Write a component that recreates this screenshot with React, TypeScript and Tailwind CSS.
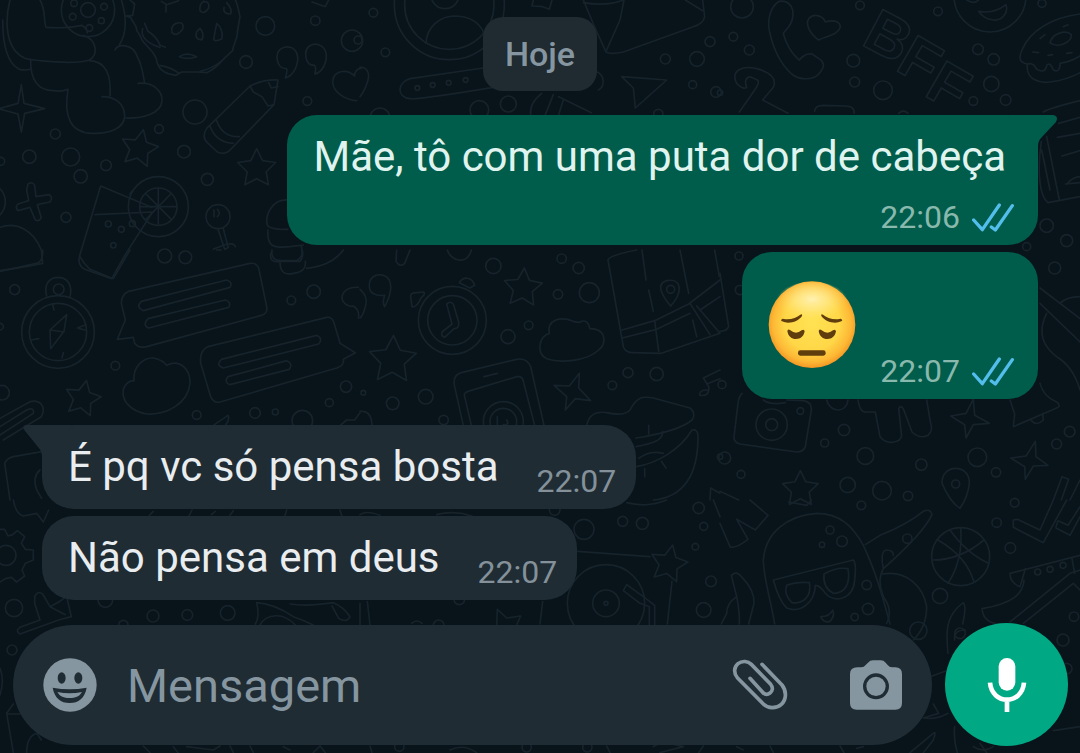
import { ReactNode } from "react";

type Dot = [number, number, number];

interface Message {
  id: number;
  text?: string;
  time: string;
  mine: boolean;
  first: boolean;
}

const messages: Message[] = [
  { id: 1, text: "Mãe, tô com uma puta dor de cabeça", time: "22:06", mine: true, first: true },
  { id: 2, time: "22:07", mine: true, first: false },
  { id: 3, text: "É pq vc só pensa bosta", time: "22:07", mine: false, first: true },
  { id: 4, text: "Não pensa em deus", time: "22:07", mine: false, first: false },
];

function starPath(cx: number, cy: number, r: number, rot: number, points = 5, inner = 0.5) {
  const out: string[] = [];
  for (let i = 0; i < points * 2; i++) {
    const a = ((rot - 90 + (i * 180) / points) * Math.PI) / 180;
    const d = i % 2 === 0 ? r : r * inner;
    out.push(`${(cx + Math.cos(a) * d).toFixed(1)} ${(cy + Math.sin(a) * d).toFixed(1)}`);
  }
  return `M${out.join("L")}Z`;
}

function Tile({ x, y, dots, paths, children }: { x: number; y: number; dots: Dot[]; paths: string[]; children?: ReactNode }) {
  return (
    <g transform={`translate(${x} ${y})`}>
      {dots.map(([cx, cy, r]) => (
        <circle key={`${cx}-${cy}-${r}`} cx={cx} cy={cy} r={r} />
      ))}
      {paths.map((d) => (
        <path key={d} d={d} />
      ))}
      {children}
    </g>
  );
}

function Wallpaper() {
  return (
    <svg
      className="absolute inset-0 h-full w-full"
      viewBox="0 0 3240 2259"
      preserveAspectRatio="xMidYMid slice"
      fill="none"
      stroke="#17232a"
      strokeWidth="5"
      strokeLinecap="round"
      strokeLinejoin="round"
      aria-hidden="true"
    >
      <Tile
        x={0}
        y={0}
        dots={[
          [796, 78, 28], [946, 62, 14], [1056, 122, 32], [738, 186, 19], [922, 303, 13], [585, 336, 36],
          [477, 387, 13], [552, 455, 19], [166, 402, 15], [88, 470, 20], [212, 471, 27], [318, 496, 16],
          [242, 529, 20], [198, 652, 15], [622, 538, 18], [264, 30, 80], [264, 30, 22], [222, 10, 10],
          [312, 20, 10], [218, 50, 10], [304, 62, 9], [268, 84, 10], [654, 650, 36], [475, 620, 90],
          [475, 620, 56], [325, 672, 9], [397, 671, 9], [364, 688, 9], [340, 736, 8], [2, 484, 12],
          [-40, 605, 56],
        ]}
        paths={[
          "M30 0C14 60 20 120 45 152C70 180 85 178 120 182C180 188 240 190 268 180C295 168 292 118 250 106",
          "M120 0C138 30 130 60 138 82C170 84 210 84 245 76C255 80 262 92 262 98",
          "M8 60C8 140 22 190 58 208Q78 212 90 208",
          "M92 178C90 240 115 272 160 272Q185 276 204 268C190 350 212 398 275 400C330 402 372 384 374 350C374 310 345 290 306 290",
          "M268 182C318 184 334 225 330 288",
          "M345 150C350 130 400 130 412 170C426 195 430 225 434 250",
          "M414 250C460 246 488 272 486 304C482 340 430 356 376 354",
          "M364 0C380 50 380 100 358 135",
          "M390 0L404 12L398 46L376 48L392 52C400 72 412 76 410 92C420 100 422 118 432 128C450 148 470 165 472 190C480 212 500 224 528 226L545 216L592 216L620 218C640 210 660 190 672 176L698 152C700 130 714 115 712 96L720 50C716 30 712 10 706 0",
          "M434 70L444 94Q470 110 480 136L496 142M428 86C420 108 440 130 480 142M480 196Q520 204 536 220M600 214Q640 204 660 186",
          "M538 170Q560 155 590 170Q562 180 538 170M600 85q14 14 6 34q-24 0-16-24zM650 70q20 16 16 46q-28 14-24-4zM528 70q26-8 20 18q-18 24-32 10q-4-20 12-28zM610 4q20 0 16 20q-14 22-26 8q-2-20 10-28M680 8q18 20 12 34q-24 0-20-20",
          "M484 4L500 14L536 2M498 16V36M936 6L976 20L986 0",
          "M832 180C826 150 850 136 872 142C896 152 898 180 886 206Q874 230 856 234Q862 216 860 206C842 206 834 196 832 180Z",
          "M918 172C912 142 934 128 956 134C982 144 984 172 972 198Q960 220 944 222Q950 206 944 196C930 196 920 190 918 172Z",
          "M1084 205C1070 205 1062 220 1064 228C1040 206 1000 210 998 246C1000 280 1040 300 1070 302",
          "M750 258L620 385Q604 410 622 428L652 456Q676 468 696 444L822 314L834 240Q790 238 750 258ZM750 258L760 276L786 290L804 318L822 314M806 248L814 264L834 260M650 362Q668 412 718 410M630 378Q648 428 700 430",
          starPath(418, 446, 58, 12),
          starPath(770, 506, 60, 0),
          "M64 254L72 310L134 326L74 340L64 396L54 342L-4 326L54 310Z",
          "M84 552Q98 544 104 556L108 590L148 584Q160 594 150 606L112 614L124 654Q116 666 106 660L90 622L54 632Q44 622 54 612L86 602L80 570Z",
          "M302 558L455 622M302 558L238 770Q232 800 260 810L335 836L378 760L458 636L285 644",
          "M390 582Q394 575 398 572M475 566V672M422 620H530M438 582L514 658M512 582L438 658M0 682C50 664 100 690 124 750L128 790Q80 800 0 812",
          "M654 688L674 748Q690 740 684 740L670 686M642 630V650M652 628q12 12 0 22M640 748Q700 720 706 740",
          "M866 600C820 596 794 640 802 676Q812 690 864 688M804 690C800 740 820 745 870 740L910 735M812 760Q808 790 840 784H900Q914 770 904 740",
        ]}
      />
      <Tile
        x={1080}
        y={0}
        dots={[
          [40, 38, 13], [76, 157, 13], [-6, 120, 12], [172, 264, 7], [218, 255, 7], [266, 248, 7], [317, 240, 7],
          [358, 330, 28], [445, 312, 24], [60, 354, 30], [916, 177, 15], [1011, 177, 22], [1050, 125, 15],
          [998, 254, 12], [1068, 276, 16], [895, 342, 14], [255, -16, 42], [268, 14, 165], [268, 14, 134],
        ]}
        paths={[
          "M198 130C200 80 240 50 280 48C330 48 360 70 372 100",
          "M0 202C20 200 30 220 24 240Q16 270 0 290",
          "M370 204L150 236C110 248 110 292 150 296Q170 300 400 262",
          "M520 0L516 18L548 20L568 28L576 0",
          "M670 0L700 72L738 156Q750 164 790 156L1000 80Q1030 72 1034 50L1028 0M792 0L780 60L740 150M670 8Q740 20 790 0M976 0L1028 32",
          "M785 230L920 240L826 324L820 264ZM710 215C735 225 735 260 715 270",
          "M545 280C520 300 508 320 512 345M580 284L556 344M596 290L694 338M610 300L596 344",
        ]}
      />
      <Tile
        x={2160}
        y={0}
        dots={[
          [66, 20, 34], [40, 110, 13], [88, 150, 15], [420, 16, 13], [654, 34, 13], [400, 182, 19], [404, 246, 15],
          [489, 271, 28], [774, 148, 16], [821, 178, 17], [814, 252, 23], [857, 300, 16], [760, 303, 13],
          [966, 10, 12], [0, 278, 8], [980, 677, 20], [1040, 722, 18], [810, -12, 108], [920, 740, 12],
        ]}
        paths={[
          "M178 4C150 20 142 60 148 92C160 150 185 195 215 222C240 242 280 240 296 222C312 204 316 190 300 178L276 162Q256 158 238 180C215 162 196 128 190 100L206 80Q222 60 218 30Q208 0 178 4Z",
          "M296 120C268 100 256 72 266 56C282 38 310 48 316 66C340 58 364 64 360 84C352 104 322 108 296 120Z",
          "M776 34C808 40 838 30 858 14C866 40 846 62 820 60Q790 56 776 34ZM740 0Q762 14 776 0",
          "M1080 42C1000 52 930 90 906 150C890 184 910 190 922 192C916 240 960 250 990 246Q1040 240 1080 218M922 192Q940 186 950 208Q976 222 980 196Q990 184 1000 210Q1020 220 1020 190Q1050 186 1080 168",
          "M990 128C1000 96 1040 90 1054 104C1056 128 1010 146 990 128ZM960 116L975 104M938 156L956 158M984 166L998 164M1030 80L1044 74M1040 160L1056 158",
          "M50 250C30 210 70 196 110 206C150 216 172 236 160 262L128 300L204 340M50 250Q70 270 80 262Q70 236 90 230L112 240Q122 246 100 276L58 336M284 334Q284 316 310 316L380 318Q404 320 402 340M536 340q14-14 28 0",
          "M970 336Q990 324 1080 302M1016 370L1080 352M1012 412L1080 400M1026 468L1080 452M1040 552Q1060 530 1080 530M964 425C950 520 960 590 984 608L1080 590M980 410L1018 600M965 450L990 570M1036 552L1080 548",
        ]}
      >
        <g fontFamily="'Liberation Sans', sans-serif" fontWeight="700" fontSize="180">
          <text transform="translate(420 132) rotate(28)">B</text>
          <text transform="translate(522 208) rotate(30)">F</text>
          <text transform="translate(608 284) rotate(30)">F</text>
        </g>
      </Tile>
      <Tile
        x={0}
        y={750}
        dots={[
          [44, 119, 15], [176, 118, 16], [174, 246, 109], [174, 246, 86], [346, 347, 13], [494, 18, 21],
          [556, 22, 19], [874, 151, 13], [941, 125, 20], [1038, 410, 17], [988, 458, 12], [765, 489, 16],
          [826, 486, 9], [590, 495, 13], [907, 512, 31], [6, 428, 22], [0, 230, 10],
        ]}
        paths={[
          "M140 138C130 100 150 82 176 82C204 84 218 106 210 140",
          "M200 194L150 240L152 296L192 244ZM150 240L192 246M158 164L162 180M232 234L258 224M94 270L116 266M186 324L190 308M238 236L256 240",
          "M0 64L110 40Q130 34 128 0M240 20Q250 40 270 58L340 86L390 0",
          "M386 124L750 40Q770 38 776 54L800 170Q804 190 784 196L440 290Q415 296 404 280L400 262L352 268L376 210L364 160Q364 134 386 124Z",
          "M424 154L680 90Q700 96 690 112L430 182Q406 172 424 154ZM444 206L676 150Q696 156 686 172L446 234Q426 226 444 206Z",
          "M624 290L980 202Q996 200 1002 218L1020 280L1066 308L1030 328Q1034 346 1010 354L660 456Q640 460 632 440L602 340Q598 300 624 290Z",
          "M664 328L950 256Q970 266 956 282L670 354Q646 346 664 328ZM684 380L860 332Q880 340 868 358L690 404Q670 396 684 380Z",
          "M402 392C398 350 430 322 460 324Q490 330 500 346C540 326 572 358 570 400C564 460 500 496 440 492C390 484 364 450 370 418Q380 392 402 392Z",
          starPath(248, 446, 56, 12),
          "M0 505L90 455C120 448 140 470 124 500L10 570M0 530L80 480Q104 470 100 490L0 555M640 526L684 496Q690 510 676 526M1016 530L1040 510H1064L1080 488",
          "M30 750L14 640Q20 625 40 620L130 604M120 660Q96 680 110 720L125 745",
          "M816 0Q812 30 840 32H890Q910 20 906 0M840 36Q840 80 880 70Q920 66 916 34M920 55C960 50 1000 40 1030 0",
          "M1075 112C1040 110 1020 130 1028 152Q1040 172 1060 168Q1080 180 1075 204M650 0h14",
        ]}
      />
      <Tile
        x={1080}
        y={750}
        dots={[
          [400, 48, 23], [605, 26, 14], [656, 54, 17], [594, 133, 14], [688, 128, 30], [506, 226, 13],
          [444, 260, 21], [277, 211, 102], [277, 211, 74], [98, 460, 19], [197, 440, 22], [251, 510, 14],
          [757, 406, 13], [804, 368, 15], [890, 372, 20], [430, 515, 60], [430, 515, 40], [932, 118, 12],
          [10, 428, 7], [1080, 620, 8],
        ]}
        paths={[
          "M110 0L108 34Q120 54 134 40L150 0M262 0C270 30 320 50 334 0",
          "M28 110C26 80 50 70 70 76C100 86 98 126 74 170Q66 160 74 136Q30 140 28 110ZM0 118Q26 140 16 170Q10 196 0 204",
          "M152 140Q150 128 170 128L192 126Q196 134 184 142Q170 174 156 170ZM298 98C310 78 336 80 344 106L330 114Z",
          "M260 162Q270 152 280 162L296 216Q298 236 282 236L254 262Q242 258 246 246L276 222Z",
          starPath(489, 114, 60, 4),
          starPath(98, 330, 74, 2),
          "M568 250C560 210 600 198 640 214Q660 220 664 214Q684 208 690 236C740 236 740 280 716 300C680 334 600 340 560 326C528 310 536 260 568 250Z",
          "M744 30Q746 16 830 0M744 30L790 290Q796 308 820 308L904 310L1080 250M786 240L884 212L986 162L1080 90M786 264L890 238L990 190M1010 168L1080 250M990 160L1050 254",
          "M1064 0L1078 80M1020 180L1080 140M884 212L896 304M960 0L986 130",
          "M846 0L858 90M866 120L880 184M932 168C900 130 890 100 920 92C960 84 974 120 932 168ZM998 210L1010 260",
          "M310 526L284 410Q276 376 304 368L470 328Q500 322 512 350L552 526M334 526L314 440Q310 428 324 424L470 380Q488 378 490 394L524 526M372 380L412 370M412 500V526M440 510Q450 526 430 524",
          "M658 370L656 414L692 452L646 446L616 480L620 440L582 406L628 408Z",
          "M680 526Q690 480 740 488Q790 500 810 480C830 440 850 438 880 444L990 474Q1010 490 996 510C960 540 880 556 828 564M828 590C880 580 910 570 908 544M828 650C890 640 960 600 996 540Q1014 536 1014 560C1014 660 980 740 880 750",
          "M866 526V552M836 625Q870 600 910 610M904 634L918 654M854 656V680M1080 360L1030 384L1046 410Q1050 440 1020 436Q1016 420 1042 420M1080 386L1040 402M1050 750L1052 714L1080 730M0 484Q34 480 36 526",
        ]}
      />
      <Tile
        x={2160}
        y={750}
        dots={[
          [57, 18, 12], [1004, 54, 18], [60, 120, 14], [155, 524, 47], [155, 524, 18], [241, 483, 10], [372, 540, 17],
          [314, 579, 12], [436, 618, 25], [604, 644, 17], [772, 622, 28], [828, 667, 14], [1049, 545, 16],
          [1010, 582, 15], [14, 624, 18], [63, 673, 12], [383, 705, 23], [486, 722, 28], [564, 738, 14],
          [707, 702, 12], [6, 404, 12],
        ]}
        paths={[
          "M0 70L26 230Q20 244 0 244M960 114L1080 206M960 160L1080 276M1020 160Q1040 140 1080 140M980 190C950 250 970 290 1010 320Q1060 350 1080 420",
          "M66 430Q56 440 54 460L42 560Q40 576 60 582L230 606Q250 606 256 590L274 480Q276 456 250 452L200 450M130 450Q150 466 196 458",
          "M320 450C330 490 380 490 384 450M414 450Q420 490 440 486L466 486L480 560Q500 584 530 574Q548 566 544 550L536 476Q540 464 550 476L576 546Q600 568 624 556Q640 540 632 520L620 450",
          "M760 448L764 496L808 520L760 524L738 564L734 524L692 498L738 490Z",
          "M946 574L948 620L984 646L940 648L916 688L914 650L872 624L918 618Z",
          starPath(241, 718, 56, 0),
          "M870 450L884 492L880 530L1010 474Q1026 468 1010 456Q970 440 960 400M934 512Q950 530 970 510L968 490",
          "M666 700C664 640 750 640 748 700Q744 740 720 775Q690 756 666 700ZM1000 750L1026 680L1046 688L1024 750M1080 690L1050 750M0 724L56 750",
        ]}
      />
      <Tile
        x={0}
        y={1500}
        dots={[
          [42, 324, 26], [36, 450, 15], [459, 348, 18], [562, 345, 16], [683, 339, 22], [18, 166, 30],
          [316, 300, 22], [370, 375, 14],
        ]}
        paths={[
          "M40 0Q46 40 70 48L110 40L130 66L146 30M0 88L14 88L24 108L38 104L52 92L74 110L64 130L76 148L100 150V180L76 190L66 210L74 228L50 246L34 232L16 236L0 246",
          "M104 290Q112 270 128 282L150 320L176 306L200 290L214 350L176 360L60 402Q44 392 60 382L120 360L104 310ZM150 320L196 344",
          "M0 505Q14 540 0 585M40 612L20 640L40 758M20 642H60M80 758Q80 710 110 700L124 720",
          "M448 46L460 34M566 50L576 30M634 44L646 34M690 46L700 32M860 30L854 50M1020 30L1026 50",
          "M770 308Q780 350 766 372M770 308C810 310 850 330 880 350Q910 360 940 375M870 312Q920 320 1000 308Q1030 320 1050 350Q1040 370 1016 355L996 318M780 375C800 340 850 336 886 375M1080 310V375",
          "M430 738L450 758M520 740L534 758M560 740L640 750L660 738M690 738L700 758M750 738L760 758M850 740L870 750M940 758L960 738L976 758",
        ]}
      />
      <Tile
        x={1080}
        y={1500}
        dots={[
          [672, 88, 30], [788, 64, 15], [847, 70, 18], [1016, 24, 17], [1031, 79, 12], [1006, 140, 10],
          [1053, 244, 16], [1031, 330, 22], [738, 310, 116], [738, 310, 40], [738, 310, 6], [236, 376, 16],
          [298, 298, 16], [584, 30, 16], [118, 740, 14], [500, 742, 14], [682, 742, 14],
        ]}
        paths={[
          "M652 154L870 170M936 244L922 372M22 305L30 375M548 305L540 372M410 375L412 328L440 354L482 348L470 375",
          starPath(926, 192, 58, 12),
          "M800 254L850 290L884 316V375M800 254L790 272L840 310L868 320V375M155 370Q170 356 186 370M0 44Q20 30 60 46M230 44Q280 30 336 48",
          "M800 8Q860 24 920 0M1060 0L1080 50M30 738L36 758M270 750Q310 730 350 758M740 738L750 758M880 740Q900 720 970 740L900 758M1030 738L1016 758",
        ]}
      />
      <Tile
        x={2160}
        y={1500}
        dots={[
          [424, 16, 13], [830, 68, 14], [871, 144, 16], [330, 90, 12], [366, 124, 16], [306, 134, 8], [440, 255, 14],
          [444, 327, 17], [404, 351, 11], [722, 170, 87], [660, 288, 23], [1062, 350, 14], [1029, 420, 18],
          [953, 216, 9], [990, 208, 9], [1029, 196, 9], [562, 116, 14], [884, 8, 13], [720, 400, 16],
          [595, 392, 26], [1040, 506, 16],
        ]}
        paths={[
          "M0 70L30 140Q44 148 84 118L50 58L106 90L144 46L90 0M206 6L260 16L274 0",
          "M164 372C150 290 130 230 130 180C136 100 200 46 290 40C360 40 400 80 430 136C470 220 490 300 510 372",
          "M160 240L400 180Q410 190 404 240C400 300 340 310 316 280Q300 256 286 256C284 310 240 340 200 324Q176 300 160 240ZM200 256Q230 244 268 248C276 290 250 312 216 308Q190 284 200 256ZM312 222Q350 200 384 206C392 250 376 280 340 280Q308 264 312 222Z",
          "M302 350Q330 350 338 330Q346 346 330 364Q310 370 302 350ZM436 134L480 106Q560 74 610 34Q632 24 636 44Q610 100 490 206M490 206C484 180 484 150 500 150Q520 150 520 166M490 206Q470 240 490 290Q520 330 500 370M488 222C560 210 610 260 620 320Q620 380 580 420",
          "M722 84Q730 180 684 250M654 120Q740 170 762 246M640 180Q720 180 792 120M690 90Q740 160 806 190",
          "M880 60L892 58L960 90L1000 0M880 60L880 82L970 128L1040 0M1008 80L1014 62L1044 76L1080 20M1008 84L1050 106L1080 50",
          "M870 220L1080 166M870 220Q870 250 900 260L916 206M912 240C910 280 880 310 786 326Q790 370 840 372M870 366L1050 220L1080 210M910 370L1060 250L1080 270M1056 176L1064 220",
          "M34 226Q50 210 66 232Q104 270 102 310L86 372M34 226L50 290Q60 340 58 372M50 290Q20 310 20 340L4 372",
          "M684 460C680 410 670 350 730 308Q740 320 728 372M736 390Q700 390 704 420M630 530L680 512M640 612L656 640L610 654Q650 660 684 640M704 680Q700 720 712 758M570 758L640 700Q650 690 640 720L610 758M1000 692L1080 680M760 740Q790 760 820 740M780 730L800 758M360 738L372 758M410 745L430 740M150 738L160 758M50 740L70 750",
        ]}
      />
    </svg>
  );
}

function Ticks() {
  return (
    <svg className="h-[29px] w-[42px] shrink-0" viewBox="756 604 126 87" role="img" aria-label="Lida">
      <path d="M761 655L787 684L838 610M814 676L826 685L877 612" fill="none" stroke="#53bdeb" strokeWidth="10" strokeLinecap="round" strokeLinejoin="round" />
    </svg>
  );
}

function PensiveFace() {
  return (
    <svg className="mt-[29px] mb-[30px] size-[88px] shrink-0" viewBox="58 62 264 264" role="img" aria-label="😔">
      <defs>
        <radialGradient id="face" cx="0.5" cy="0.48" r="0.53">
          <stop offset="0" stopColor="#ffe252" />
          <stop offset="0.6" stopColor="#ffd747" />
          <stop offset="0.85" stopColor="#fdb835" />
          <stop offset="1" stopColor="#f39322" />
        </radialGradient>
        <radialGradient id="shine" cx="0.5" cy="0.4" r="0.5">
          <stop offset="0" stopColor="#fff5c4" stopOpacity="0.85" />
          <stop offset="0.5" stopColor="#ffefa0" stopOpacity="0.5" />
          <stop offset="1" stopColor="#ffe768" stopOpacity="0" />
        </radialGradient>
      </defs>
      <circle cx="190" cy="193" r="130" fill="url(#face)" />
      <ellipse cx="190" cy="130" rx="110" ry="66" fill="url(#shine)" />
      <g fill="#5f3d0c">
        <path d="M98 178Q101 174 106 176C126 179 144 172 155 163Q162 160 160 167C148 184 120 193 100 183Q96 181 98 178Z" />
        <path d="M280 178Q277 174 272 176C252 179 234 172 223 163Q216 160 218 167C230 184 258 193 278 183Q282 181 280 178Z" />
        <path d="M116 212Q118 204 125 210Q142 224 159 210Q166 205 168 213C165 229 155 236 142 236S119 229 116 212Z" />
        <path d="M210 212Q212 204 219 210Q236 224 253 210Q260 205 262 213C259 229 249 236 236 236S213 229 210 212Z" />
        <rect x="148" y="270" width="83" height="16" rx="7" />
      </g>
    </svg>
  );
}

function Tail({ mine }: { mine: boolean }) {
  return mine ? (
    <svg className="absolute top-0 -right-[19px] h-8 w-12" viewBox="0 0 48 32" fill="#005c4b" aria-hidden="true">
      <path d="M0 0H44Q50 1 47 7L32 23Q29 26 29 32H0Z" />
    </svg>
  ) : (
    <svg className="absolute top-0 -left-[19px] h-8 w-12" viewBox="0 0 48 32" fill="#1f2c34" aria-hidden="true">
      <path d="M48 0H3Q-2 1 2 6L15 22Q19 26 19 32H48Z" />
    </svg>
  );
}

function Bubble({ message }: { message: Message }) {
  const { text, time, mine, first } = message;

  if (!mine) {
    return (
      <div className="relative flex items-end gap-[38px] self-start rounded-[32px] bg-[#1f2c34] pt-3.5 pr-5 pb-2 pl-[26px]">
        {first && <Tail mine={false} />}
        <p className="relative pb-1.5 text-[42px] leading-14 text-[#e9edef]">{text}</p>
        <time className="text-[32px] leading-10 text-[#84919a]">{time}</time>
      </div>
    );
  }

  return (
    <div className={`relative self-end rounded-[30px] bg-[#005c4b] pr-6 pb-2 pl-[26px] ${text ? "pt-3.5" : "flex items-end gap-6"}`}>
      {first && <Tail mine />}
      {text ? (
        <p className="relative mb-3 pr-2 text-[42px] leading-14 text-[#e0f4ef]">{text}</p>
      ) : (
        <div className="-mb-2">
          <PensiveFace />
        </div>
      )}
      <div className="flex items-center justify-end gap-3">
        <time className="text-[32px] leading-10 text-[#89b8ad]">{time}</time>
        <Ticks />
      </div>
    </div>
  );
}

function Composer() {
  return (
    <form className="flex items-center gap-[13px] pr-3 pl-[13px]" onSubmit={(e) => e.preventDefault()}>
      <div className="flex h-[120px] min-w-0 flex-1 items-center rounded-full bg-[#1f2c34] px-[30px]">
        <button type="button" aria-label="Emoji" className="shrink-0">
          <svg className="size-[54px]" viewBox="129 472 162 162" fill="#8696a0">
            <circle cx="210" cy="553" r="80" />
            <g fill="#1f2c34">
              <ellipse cx="185" cy="532" rx="12" ry="17" />
              <ellipse cx="235" cy="532" rx="12" ry="17" />
              <path d="M158 561Q209 570 260 561C254 592 236 607 209 607S164 592 158 561Z" />
            </g>
            <path d="M172 574Q209 582 246 574C238 588 226 592 209 592S180 588 172 574Z" />
          </svg>
        </button>
        <input
          type="text"
          aria-label="Mensagem"
          placeholder="Mensagem"
          className="ml-[30px] h-16 min-w-0 flex-1 bg-transparent pt-1 text-[47px] text-[#e9edef] outline-none placeholder:text-[#8696a0]"
        />
        <button type="button" aria-label="Anexar" className="shrink-0">
          <svg className="h-[55px] w-[60px]" viewBox="30 470 180 165" fill="none" stroke="#8696a0" strokeWidth="11" strokeLinecap="round" strokeLinejoin="round">
            <path d="M126 492L186 554C200 572 200 598 184 612C168 626 144 625 130 611L52 532C40 518 42 500 54 490C66 480 84 482 94 492L152 552C160 562 158 572 150 578C142 584 134 582 128 576L90 534" />
          </svg>
        </button>
        <button type="button" aria-label="Câmera" className="ml-[60px] shrink-0">
          <svg className="h-[50px] w-[52px]" viewBox="390 475 156 150">
            <path d="M412 497H424Q432 497 437 490L444 483Q450 476 459 476H482Q491 476 497 483L503 490Q508 497 516 497H526Q546 497 546 517V604Q546 624 526 624H410Q390 624 390 604V517Q390 497 412 497Z" fill="#8696a0" />
            <circle cx="468" cy="554" r="34" fill="none" stroke="#1f2c34" strokeWidth="10" />
          </svg>
        </button>
      </div>
      <button type="button" aria-label="Gravar áudio" className="flex size-[123px] shrink-0 items-center justify-center rounded-full bg-[#00a884]">
        <svg className="h-[54px] w-10" viewBox="800 472 120 162">
          <rect x="835" y="472" width="50" height="98" rx="25" fill="#fff" />
          <path d="M809 546C812 580 836 597 860 597S908 580 911 546M860 597V634" fill="none" stroke="#fff" strokeWidth="14" />
        </svg>
      </button>
    </form>
  );
}

export default function App() {
  return (
    <div className="relative min-h-screen overflow-hidden bg-[#08131a] font-[Roboto,sans-serif]">
      <Wallpaper />
      <div className="relative flex min-h-screen flex-col justify-between pt-[17px] pb-[7px]">
        <main className="flex flex-col px-[42px]">
          <div className="mb-6 self-center rounded-[20px] bg-[#1f2a31] px-[22px] py-3 text-[34px] leading-[50px] font-medium text-[#8696a0]">
            Hoje
          </div>
          <section className="flex flex-col gap-[7px]">
            {messages.slice(0, 2).map((m) => (
              <Bubble key={m.id} message={m} />
            ))}
          </section>
          <section className="mt-[26px] mb-[22px] flex flex-col gap-[7px]">
            {messages.slice(2).map((m) => (
              <Bubble key={m.id} message={m} />
            ))}
          </section>
        </main>
        <Composer />
      </div>
    </div>
  );
}
